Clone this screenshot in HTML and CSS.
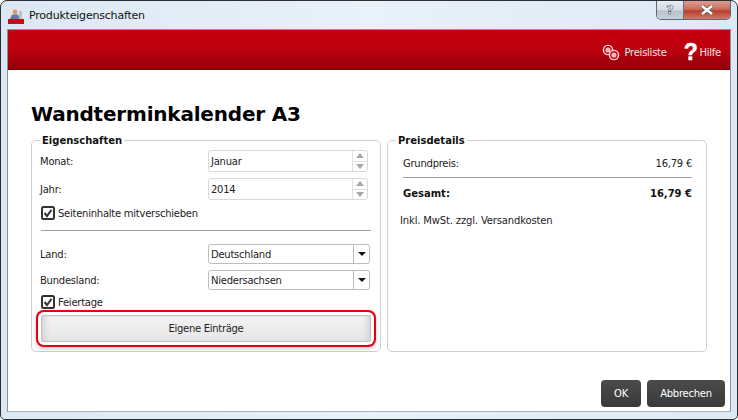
FILE: index.html
```html
<!DOCTYPE html>
<html lang="de">
<head>
<meta charset="utf-8">
<title>Produkteigenschaften</title>
<link rel="stylesheet" href="styles.css">
</head>
<body>
<div class="window">
  <div class="titlebar">
    <svg class="app-icon" width="16" height="16" viewBox="0 0 16 16">
      <rect x="0" y="0" width="16" height="11" fill="#dfe6ee"/>
      <rect x="0" y="11" width="16" height="5" fill="#c0101a"/>
      <circle cx="7" cy="4" r="2.4" fill="#d99a66"/>
      <path d="M2 11 L4 6.5 L10 6.5 L12 11 Z" fill="#5b7fa8"/>
      <rect x="11" y="3" width="3" height="8" fill="#b9c2cc"/>
    </svg>
    <span class="title">Produkteigenschaften</span>
    <div class="caption-btns">
      <div class="cap-help">?</div>
      <div class="cap-close">
        <svg width="14" height="10" viewBox="0 0 14 10"><path d="M2 1 L12 9 M12 1 L2 9" stroke="#59606a" stroke-width="4"/><path d="M2 1 L12 9 M12 1 L2 9" stroke="#fff" stroke-width="2.4"/></svg>
      </div>
    </div>
  </div>
  <div class="client">
    <header class="banner">
      <a class="banner-link">
        <svg width="18" height="17" viewBox="0 0 18 17" fill="none" stroke="#fbdcdc">
          <circle cx="6" cy="6" r="4.6" stroke-width="1.4"/>
          <circle cx="6" cy="6" r="2.6" fill="#f3b8b8" stroke="none"/>
          <circle cx="12" cy="11" r="4.6" stroke-width="1.4" fill="#c00010"/>
          <circle cx="12" cy="11" r="2.6" fill="#f3b8b8" stroke="none"/>
        </svg>
        <span>Preisliste</span>
      </a>
      <a class="banner-link help-link"><b class="help-mark">?</b><span>Hilfe</span></a>
    </header>
    <main class="content">
      <h1>Wandterminkalender A3</h1>
      <div class="panels">
        <fieldset class="group group-props">
          <legend>Eigenschaften</legend>
          <div class="row spin-row">
            <label>Monat:</label>
            <div class="field"><span class="value">Januar</span><div class="spin"><i class="up"></i><i class="down"></i></div></div>
          </div>
          <div class="row spin-row">
            <label>Jahr:</label>
            <div class="field"><span class="value">2014</span><div class="spin"><i class="up"></i><i class="down"></i></div></div>
          </div>
          <div class="check">
            <svg class="box" width="14" height="14" viewBox="0 0 14 14"><rect x="1" y="1" width="12" height="12" rx="1.5" fill="#fff" stroke="#333" stroke-width="2"/><path d="M3.5 7 L6 10 L10.5 3.8" fill="none" stroke="#333" stroke-width="2"/></svg>
            <span>Seiteninhalte mitverschieben</span>
          </div>
          <hr class="rule">
          <div class="row select-row">
            <label>Land:</label>
            <div class="select"><span class="value">Deutschland</span><div class="arrow"><i></i></div></div>
          </div>
          <div class="row select-row last-select">
            <label>Bundesland:</label>
            <div class="select"><span class="value">Niedersachsen</span><div class="arrow"><i></i></div></div>
          </div>
          <div class="check">
            <svg class="box" width="14" height="14" viewBox="0 0 14 14"><rect x="1" y="1" width="12" height="12" rx="1.5" fill="#fff" stroke="#333" stroke-width="2"/><path d="M3.5 7 L6 10 L10.5 3.8" fill="none" stroke="#333" stroke-width="2"/></svg>
            <span>Feiertage</span>
          </div>
          <button class="own">Eigene Einträge</button>
        </fieldset>
        <fieldset class="group group-price">
          <legend>Preisdetails</legend>
          <div class="price-row"><span>Grundpreis:</span><span>16,79 €</span></div>
          <hr class="rule price-rule">
          <div class="price-row total"><span>Gesamt:</span><span>16,79 €</span></div>
          <p class="note">Inkl. MwSt. zzgl. Versandkosten</p>
        </fieldset>
      </div>
      <div class="actions">
        <button class="dark ok">OK</button>
        <button class="dark cancel">Abbrechen</button>
      </div>
    </main>
  </div>
</div>
</body>
</html>
```
FILE: styles.css
```css
* { box-sizing: border-box; }
html, body { margin: 0; padding: 0; }
body {
  width: 738px; height: 420px; overflow: hidden;
  font-family: "DejaVu Sans", sans-serif; font-size: 10px; color: #222;
  letter-spacing: -0.25px;
  background: #fff;
}
.window {
  width: 738px; height: 420px;
  display: flex; flex-direction: column;
  padding: 0 6px 7px 6px;
  background: linear-gradient(90deg, #dbe8f4 0, #e9f1f9 50%, #dce9f5 100%);
  border: 1px solid #2b2f33;
  border-radius: 7px 7px 5px 5px;
}
.titlebar {
  height: 28px; flex: none;
  display: flex; align-items: flex-start;
}
.app-icon { margin: 7px 0 0 1px; flex: none; }
.title { margin: 8px 0 0 5px; font-size: 11px; color: #111; letter-spacing: -0.2px; }
.caption-btns {
  margin-left: auto;
  display: flex; height: 19px;
  border: 1px solid #5f6a78; border-top: 0;
  border-radius: 0 0 5px 5px; overflow: hidden;
}
.cap-help {
  width: 27px; text-align: center;
  background: linear-gradient(#e6edf4, #d3dbe3 50%, #b9c3cd 55%, #c7d0d9);
  font: bold 13px/18px "DejaVu Sans", sans-serif; color: #eef2f6;
  -webkit-text-stroke: 0.5px #3c444e;
  border-right: 1px solid #68727e;
}
.cap-close {
  width: 46px; display: flex; align-items: center; justify-content: center;
  background: linear-gradient(#dd9d8f, #c9705e 45%, #b93d2a 55%, #cf7a68);
}
.client {
  flex: 1; display: flex; flex-direction: column;
  background: #fff;
  border: 1px solid #8b939c; border-bottom-color: #a9b3bd;
  min-height: 0;
}
.banner {
  height: 40px; flex: none;
  display: flex; align-items: center; justify-content: flex-end;
  gap: 17px; padding: 4px 9px 0 0;
  background: linear-gradient(#c2000f 0, #bf000f 45%, #8d0008 100%);
  color: #fbe3e3;
}
.banner-link { display: flex; align-items: center; gap: 4px; font-size: 10px; }
.help-link { gap: 2px; }
.help-mark { font: bold 23px/22px "Liberation Sans", sans-serif; color: #fff; -webkit-text-stroke: 0.5px #fff; }
.content {
  flex: 1; display: flex; flex-direction: column;
  padding: 31px 5px 4px 23px; min-height: 0;
}
h1 {
  margin: 0; font: bold 20px/26px "DejaVu Sans", sans-serif; color: #000;
  letter-spacing: -0.2px;
}
.panels { display: flex; gap: 6px; margin-top: 7px; height: 218px; flex: none; margin-right: 18px; }
.group {
  margin: 0; padding: 3px 0 0;
  border: 1px solid #cfcfcf; border-radius: 5px;
  min-width: 0;
}
.group legend {
  padding: 0 2px;
  font-weight: bold; font-size: 10px; line-height: 13px; color: #111;
  letter-spacing: 0;
}
.group-props { width: 350px; padding-left: 9px; padding-right: 9px; }
.group-props legend { margin-left: -1px; }
.group-price { flex: 1; padding-left: 15px; padding-right: 14px; }
.group-price legend { margin-left: -7px; }
.row { display: flex; align-items: center; }
.row label { width: 168px; margin-left: -1px; padding-top: 1px; flex: none; }
.spin-row { height: 22px; margin-bottom: 6px; }
.field, .select {
  display: flex; align-items: center;
  border: 1px solid #d8d8d8; border-radius: 3px;
  background: #fff; height: 100%;
}
.field { width: 160px; }
.value { flex: 1; padding: 1px 0 0 2px; }
.spin { width: 15px; height: 100%; display: flex; flex-direction: column; border-left: 1px solid #e2e2e2; }
.spin i { flex: 1; display: flex; align-items: center; justify-content: center; }
.spin i::before { content: ""; border-left: 4px solid transparent; border-right: 4px solid transparent; }
.spin .up { border-bottom: 1px solid #e2e2e2; }
.spin .up::before { border-bottom: 5px solid #a8a8a8; }
.spin .down::before { border-top: 5px solid #a8a8a8; }
.check { display: flex; align-items: center; gap: 3px; height: 14px; }
.box { flex: none; }
.rule { border: 0; border-top: 1px solid #a0a0a0; margin: 10px 0 13px; }
.select-row { height: 20px; margin-bottom: 6px; }
.last-select { margin-bottom: 5px; }
.select { width: 162px; border-color: #bdbdbd; }
.arrow { width: 16px; height: 100%; border-left: 1px solid #bdbdbd; display: flex; align-items: center; justify-content: center; }
.arrow i { border-left: 4px solid transparent; border-right: 4px solid transparent; border-top: 4px solid #111; }
.own {
  display: block; width: 330px; height: 27px; margin-top: 6px; padding: 0;
  font: 10px "DejaVu Sans", sans-serif; letter-spacing: -0.3px; color: #222;
  background: linear-gradient(#f3f3f3, #e6e6e6);
  border: 1px solid #c2c2c2; border-radius: 3px;
  box-shadow: inset 6px 0 6px -4px #cfcfcf, inset -6px 0 6px -4px #cfcfcf, 0 0 0 3px #fff, 0 0 0 5px #e60012, 0 2px 4px 5px rgba(0,0,0,.2);
}
.price-row { display: flex; justify-content: space-between; line-height: 13px; margin-top: 7px; }
.price-rule { margin: 7px 0 9px; }
.total { margin-top: 0; font-weight: bold; color: #111; letter-spacing: 0; }
.note { margin: 14px 0 0 -3px; line-height: 13px; letter-spacing: -0.15px; }
.actions { margin-top: auto; display: flex; justify-content: flex-end; gap: 6px; }
.dark {
  height: 27px; padding: 0;
  font: 10px "DejaVu Sans", sans-serif; letter-spacing: -0.25px; color: #fff;
  background: linear-gradient(#4b4b4b, #3a3a3a);
  border: 0; border-radius: 4px;
}
.ok { width: 40px; }
.cancel { width: 78px; }
```
